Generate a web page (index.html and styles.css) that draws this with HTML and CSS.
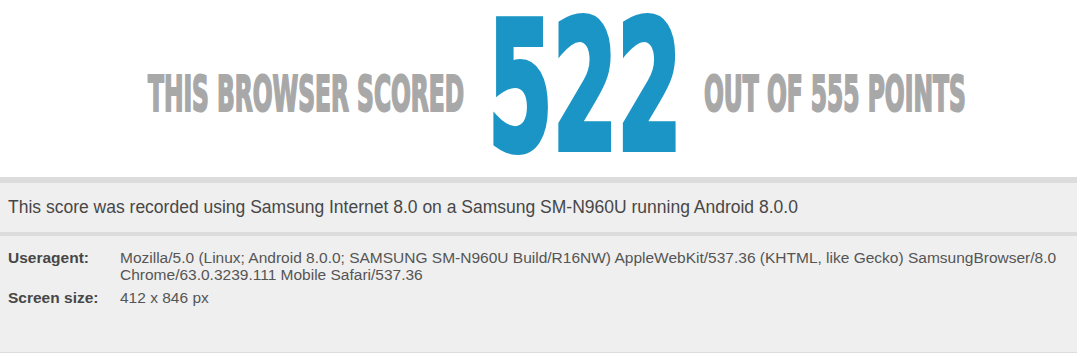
FILE: index.html
```html
<!DOCTYPE html>
<html>
<head>
    <title>HTML5 Test - Score</title>
    <link rel="stylesheet" href="styles.css">
</head>
<body>
    <div class="score">
        <span class="phrase phrase-left"><span class="squeeze">THIS BROWSER SCORED</span></span>
        <span class="points"><span class="squeeze">522</span></span>
        <span class="phrase phrase-right"><span class="squeeze">OUT OF 555 POINTS</span></span>
    </div>

    <div class="details">
        <div class="summary">This score was recorded using Samsung Internet 8.0 on a Samsung SM-N960U running Android 8.0.0</div>
        <div class="info">
            <div class="label">Useragent:</div>
            <div class="value">Mozilla/5.0 (Linux; Android 8.0.0; SAMSUNG SM-N960U Build/R16NW) AppleWebKit/537.36 (KHTML, like Gecko) SamsungBrowser/8.0 Chrome/63.0.3239.111 Mobile Safari/537.36</div>
            <div class="label">Screen size:</div>
            <div class="value">412 x 846 px</div>
        </div>
    </div>
</body>
</html>
```

FILE: styles.css
```css
body {
    margin: 0;
    background: #fff;
    font-family: "Liberation Sans", Arial, sans-serif;
}
.score {
    height: 177px;
    box-sizing: border-box;
    padding: 6px 0 0 31px;
    display: flex;
    justify-content: center;
    align-items: flex-start;
    gap: 26px;
    font-family: "DejaVu Sans Condensed", "DejaVu Sans", sans-serif;
    font-weight: bold;
    font-stretch: condensed;
}
.phrase {
    margin-top: 67px;
    font-size: 49px;
    line-height: 0.9;
    color: #a8a8a8;
    -webkit-text-stroke: 2px #a8a8a8;
}
.phrase-left {
    width: 314px;
}
.phrase-right {
    width: 259px;
}
.points {
    width: 190px;
    font-size: 178px;
    line-height: 0.92;
    color: #1a95c5;
    -webkit-text-stroke: 6px #1a95c5;
}
.squeeze {
    display: inline-block;
    white-space: nowrap;
    transform-origin: left top;
}
.phrase-left .squeeze {
    margin-right: -300px;
    transform: scaleX(0.529);
}
.phrase-right .squeeze {
    margin-right: -250px;
    transform: scaleX(0.53);
}
.points .squeeze {
    margin-right: -170px;
    transform: scaleX(0.58);
}
.details {
    margin-right: 3px;
    border-top: 6px solid #dcdcdc;
    border-bottom: 1px solid #dddddd;
    background: #efefef;
    color: #474747;
}
.summary {
    height: 49px;
    display: flex;
    align-items: center;
    padding-left: 8px;
    border-bottom: 4px solid #dcdcdc;
    font-size: 17.5px;
}
.info {
    height: 116px;
    box-sizing: border-box;
    padding: 14px 8px 0;
    display: grid;
    grid-template-columns: 112px 1fr;
    row-gap: 7px;
    align-content: start;
    font-size: 15.5px;
    line-height: 16.6px;
}
.label {
    font-weight: bold;
}
.value {
    color: #555;
}
```
